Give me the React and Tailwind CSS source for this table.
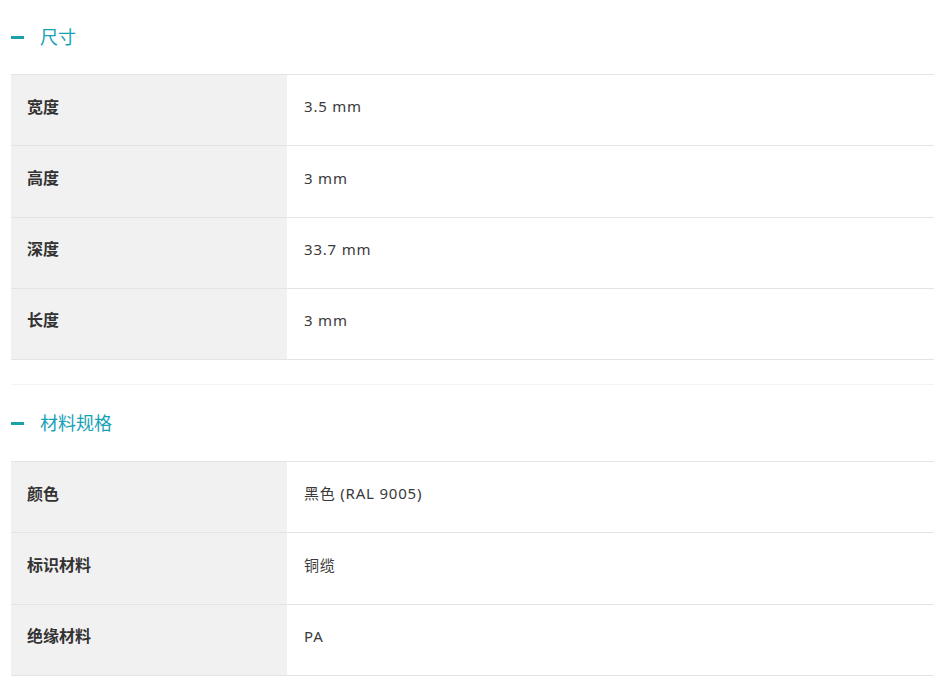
const sections = [
  {
    title: "尺寸",
    rows: [
      ["宽度", "3.5 mm"],
      ["高度", "3 mm"],
      ["深度", "33.7 mm"],
      ["长度", "3 mm"],
    ],
  },
  {
    title: "材料规格",
    rows: [
      ["颜色", "黑色 (RAL 9005)"],
      ["标识材料", "铜缆"],
      ["绝缘材料", "PA"],
    ],
  },
];

const Section = ({ title, rows, first }) => {
  return (
    <div className={first ? "" : "border-t border-[#f3f3f3] mt-[24px]"}>
      <div className={`flex items-center gap-[16px] ${first ? "h-[74px] pt-[1px]" : "h-[76px] pt-[1px]"}`}>
        <span className="block w-[13px] h-[3px] bg-[#1aa0a8]" />
        <span className="text-[18px] text-[#16a1b5]">{title}</span>
      </div>
      <div className="border-t border-[#e4e4e4]">
        {rows.map(([label, value]) => (
          <div key={label} className="flex h-[71.25px] border-b border-[#e4e4e4]">
            <div className="w-[276px] bg-[#f1f1f1] flex items-center pl-[16px] pb-[7px] text-[16px] font-bold text-[#333]">
              {label}
            </div>
            <div className="flex-1 flex items-center pl-[17px] pb-[7px] text-[15px] tracking-[0.8px] text-[#3a3a3a]">
              {value}
            </div>
          </div>
        ))}
      </div>
    </div>
  );
};

const App = () => {
  return (
    <div
      className="bg-white w-[948px] h-[684px] overflow-hidden pl-[11px] pr-[14px]"
      style={{ fontFamily: '"Noto Sans", "Noto Sans CJK SC", sans-serif' }}
    >
      {sections.map((s, i) => (
        <Section key={s.title} title={s.title} rows={s.rows} first={i === 0} />
      ))}
    </div>
  );
};

export default App;
